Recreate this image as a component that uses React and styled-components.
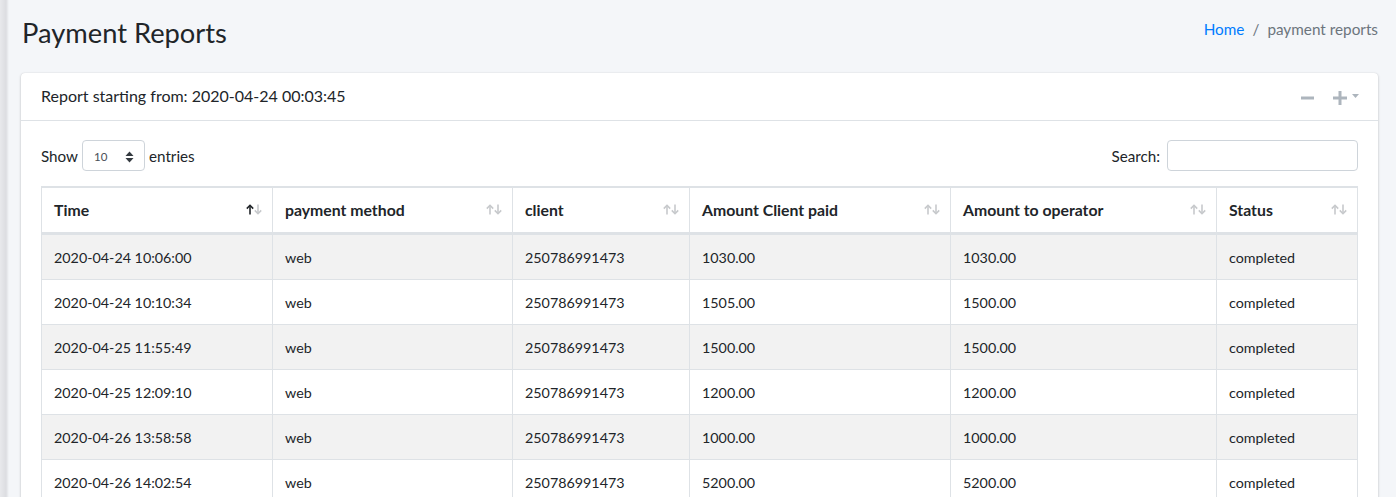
import React from "react";
import styled, { createGlobalStyle } from "styled-components";

const Global = createGlobalStyle`
  html, body { margin: 0; padding: 0; }
  body {
    background: #f4f6f9;
    font-family: Lato, "Noto Sans", sans-serif;
    color: #212529;
    -webkit-font-smoothing: antialiased;
  }
  * { box-sizing: border-box; }
`;

const Wrapper = styled.div`
  min-height: 497px;
  background: linear-gradient(to right, #e8e9ec 0px, #dcdde1 6px, #eceef1 8px, #f4f6f9 9px);
  padding: 15px 18px 0 21px;
`;

const ContentHeader = styled.div`
  display: flex;
  justify-content: space-between;
  align-items: flex-start;
  margin-bottom: 22px;
`;

const Title = styled.h1`
  margin: 0 0 0 1px;
  font-size: 27.3px;
  font-weight: 400;
  line-height: 36px;
  color: #212529;
`;

const Breadcrumb = styled.ol`
  list-style: none;
  display: flex;
  margin: 3px 0 0;
  padding: 0;
  font-size: 15.3px;
  line-height: 22px;
`;

const Crumb = styled.li`
  color: ${(p) => (p.$link ? "#007bff" : "#6c757d")};
`;

const Separator = styled.li`
  color: #6c757d;
  padding: 0 8px;
`;

const Card = styled.div`
  background: #fff;
  border-radius: 4px;
  box-shadow: 0 0 1px rgba(0, 0, 0, 0.125), 0 1px 3px rgba(0, 0, 0, 0.2);
`;

const CardHeader = styled.div`
  display: flex;
  justify-content: space-between;
  align-items: center;
  padding: 11px 20px 13px;
  border-bottom: 1px solid #dee2e6;
`;

const CardTitle = styled.h3`
  margin: 0;
  font-size: 16px;
  font-weight: 400;
  line-height: 23px;
`;

const Tools = styled.div`
  display: flex;
  align-items: center;
  gap: 19px;
  margin-right: -1px;
  margin-top: 5px;
`;

const ToolButton = styled.span`
  display: inline-flex;
  align-items: center;
  gap: 5px;
`;

const CardBody = styled.div`
  padding: 20px;
`;

const Controls = styled.div`
  display: flex;
  justify-content: space-between;
  align-items: center;
  margin-bottom: 15px;
  font-size: 15.2px;
`;

const Label = styled.label`
  display: flex;
  align-items: center;
  gap: 4px;
  margin-top: -1px;
`;

const SelectBox = styled.span`
  display: inline-flex;
  align-items: center;
  justify-content: space-between;
  width: 63px;
  height: 31px;
  border: 1px solid #ced4da;
  border-radius: 4px;
  padding: 2px 10px 0 11px;
  font-size: 11.5px;
  color: #495057;
`;

const SearchInput = styled.input`
  width: 191px;
  height: 31px;
  border: 1px solid #ced4da;
  border-radius: 4px;
  margin-left: 3px;
  outline: none;
`;

const Table = styled.table`
  width: 1317px;
  table-layout: fixed;
  border-collapse: separate;
  border-spacing: 0;
  border: 1px solid #dee2e6;
  font-size: 14.3px;
`;

const Th = styled.th`
  text-align: left;
  font-weight: 700;
  font-size: 15.8px;
  line-height: 22px;
  padding: 10px 12px 11px;
  border-top: 1px solid #dee2e6;
  border-bottom: 2px solid #dee2e6;
  border-right: ${(p) => (p.$last ? "0" : "1px solid #dee2e6")};
`;

const ThInner = styled.div`
  display: flex;
  justify-content: space-between;
  align-items: center;
  padding-top: 1px;
`;

const Td = styled.td`
  padding: 12px 12px 10px;
  line-height: 22px;
  border-top: 1px solid #dee2e6;
  border-right: ${(p) => (p.$last ? "0" : "1px solid #dee2e6")};
  background: ${(p) => (p.$odd ? "#f2f2f2" : "#fff")};
`;

const SortIcon = ({ active }) => (
  <svg width="16" height="11" viewBox="0 0 16 11" style={{ marginRight: -2, marginTop: -2 }}>
    <g fill="none" strokeWidth="1.6" strokeLinecap="butt">
      <g stroke={active ? "#212529" : "#c7c9cc"}>
        <path d="M4 10.5V1.5" />
        <path d="M0.8 4.6L4 1.3L7.2 4.6" />
      </g>
      <g stroke="#c7c9cc">
        <path d="M12 0.5V9.5" />
        <path d="M8.8 6.4L12 9.7L15.2 6.4" />
      </g>
    </g>
  </svg>
);

const columns = [
  { title: "Time", width: 231, active: true },
  { title: "payment method", width: 240 },
  { title: "client", width: 177 },
  { title: "Amount Client paid", width: 261 },
  { title: "Amount to operator", width: 266 },
  { title: "Status", width: 140 },
];

const rows = [
  ["2020-04-24 10:06:00", "web", "250786991473", "1030.00", "1030.00", "completed"],
  ["2020-04-24 10:10:34", "web", "250786991473", "1505.00", "1500.00", "completed"],
  ["2020-04-25 11:55:49", "web", "250786991473", "1500.00", "1500.00", "completed"],
  ["2020-04-25 12:09:10", "web", "250786991473", "1200.00", "1200.00", "completed"],
  ["2020-04-26 13:58:58", "web", "250786991473", "1000.00", "1000.00", "completed"],
  ["2020-04-26 14:02:54", "web", "250786991473", "5200.00", "5200.00", "completed"],
];

export default function App() {
  return (
    <>
      <Global />
      <Wrapper>
        <ContentHeader>
          <Title>Payment Reports</Title>
          <Breadcrumb>
            <Crumb $link>Home</Crumb>
            <Separator>/</Separator>
            <Crumb>payment reports</Crumb>
          </Breadcrumb>
        </ContentHeader>
        <Card>
          <CardHeader>
            <CardTitle>Report starting from: 2020-04-24 00:03:45</CardTitle>
            <Tools>
              <ToolButton>
                <svg width="13" height="14" viewBox="0 0 13 14">
                  <rect x="0" y="5.5" width="13" height="3" fill="#adb5bd" />
                </svg>
              </ToolButton>
              <ToolButton>
                <svg width="14" height="14" viewBox="0 0 14 14">
                  <rect x="0" y="5.5" width="14" height="3" fill="#adb5bd" />
                  <rect x="5.5" y="0" width="3" height="14" fill="#adb5bd" />
                </svg>
                <svg width="7" height="4" viewBox="0 0 7 4" style={{ marginTop: -4 }}>
                  <path d="M0 0H7L3.5 4Z" fill="#adb5bd" />
                </svg>
              </ToolButton>
            </Tools>
          </CardHeader>
          <CardBody>
            <Controls>
              <Label>
                Show
                <SelectBox>
                  10
                  <svg width="9" height="12" viewBox="0 0 9 12">
                    <path d="M0.5 5L4.5 0.5L8.5 5Z" fill="#343a40" />
                    <path d="M0.5 7L4.5 11.5L8.5 7Z" fill="#343a40" />
                  </svg>
                </SelectBox>
                entries
              </Label>
              <Label>
                Search:
                <SearchInput type="search" />
              </Label>
            </Controls>
            <Table>
              <colgroup>
                {columns.map((c) => (
                  <col key={c.title} style={{ width: c.width }} />
                ))}
              </colgroup>
              <thead>
                <tr>
                  {columns.map((c, i) => (
                    <Th key={c.title} $last={i === columns.length - 1}>
                      <ThInner>
                        {c.title}
                        <SortIcon active={c.active} />
                      </ThInner>
                    </Th>
                  ))}
                </tr>
              </thead>
              <tbody>
                {rows.map((r, ri) => (
                  <tr key={ri}>
                    {r.map((v, ci) => (
                      <Td key={ci} $odd={ri % 2 === 0} $last={ci === r.length - 1}>
                        {v}
                      </Td>
                    ))}
                  </tr>
                ))}
              </tbody>
            </Table>
          </CardBody>
        </Card>
      </Wrapper>
    </>
  );
}
